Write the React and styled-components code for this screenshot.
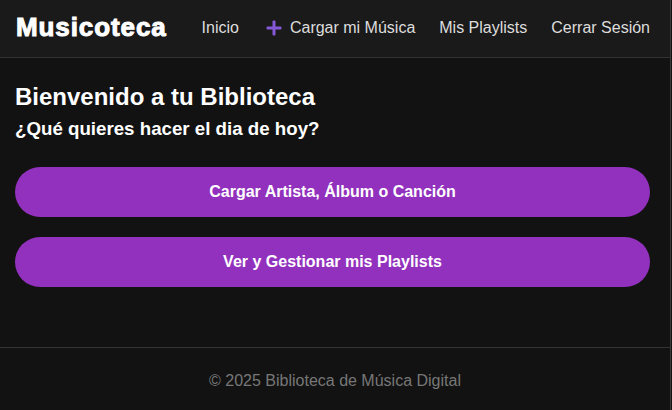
import React from 'react'
import styled, { createGlobalStyle } from 'styled-components';

const GlobalStyle = createGlobalStyle`
  * { box-sizing: border-box; }
  body {
    margin: 0;
    background-color: #121212;
    font-family: "Liberation Sans", Arial, sans-serif;
  }
`;

function PlusIcon() {
    return (
        <svg width="16" height="16" viewBox="0 0 16 16">
            <rect x="6.5" y="0.5" width="3" height="15" rx="1" fill="#8458d6" />
            <rect x="0.5" y="6.5" width="15" height="3" rx="1" fill="#8458d6" />
        </svg>
    )
}

function App() {
    return (
<Page>
    <GlobalStyle />
    <Header>
        <Logo>Musicoteca</Logo>
        <Nav>
            <NavLink href="#">Inicio</NavLink>
            <NavLink href="#" $spaced><PlusIcon /> Cargar mi Música</NavLink>
            <NavLink href="#">Mis Playlists</NavLink>
            <NavLink href="#">Cerrar Sesión</NavLink>
        </Nav>
    </Header>

    <Main>
        <Title>Bienvenido a tu Biblioteca</Title>
        <Subtitle>¿Qué quieres hacer el dia de hoy?</Subtitle>

        <Actions>
            <ActionButton>Cargar Artista, Álbum o Canción</ActionButton>
            <ActionButton>Ver y Gestionar mis Playlists</ActionButton>
        </Actions>
    </Main>

    <Footer>© 2025 Biblioteca de Música Digital</Footer>
</Page>
    )
}

export default App

const Page = styled.div`
  width: 671px;
  min-height: 410px;
  border-right: 1px solid #3a3a3a;
  background-color: #121212;
  display: flex;
  flex-direction: column;
`;

const Header = styled.header`
  height: 58px;
  background-color: #1a1a1a;
  border-bottom: 1px solid #333;
  display: flex;
  align-items: center;
  justify-content: space-between;
  padding: 0 20px 0 16px;
`;

const Logo = styled.div`
  color: #fff;
  font-size: 26px;
  font-weight: 700;
  letter-spacing: 0.9px;
  -webkit-text-stroke: 1px #fff;
  margin-top: -3px;
`;

const Nav = styled.nav`
  display: flex;
  align-items: center;
  gap: 24px;
  margin-top: -2px;
`;

const NavLink = styled.a`
  color: #ddd;
  text-decoration: none;
  font-size: 16px;
  display: flex;
  align-items: center;
  gap: 8px;
  margin-left: ${props => props.$spaced ? '3px' : '0'};

  svg {
    margin-top: 1px;
  }
`;

const Main = styled.main`
  flex: 1;
  padding: 25px 15px 0 15px;
  height: 289px;
`;

const Title = styled.h2`
  margin: 0;
  color: #fff;
  font-size: 24px;
  font-weight: 700;
  line-height: 28px;
`;

const Subtitle = styled.h3`
  margin: 7px 0 0;
  color: #fff;
  font-size: 18.72px;
  font-weight: 700;
  line-height: 22px;
`;

const Actions = styled.div`
  display: flex;
  flex-direction: column;
  gap: 20px;
  margin-top: 27px;
  padding-right: 5px;
`;

const ActionButton = styled.button`
  height: 50px;
  border: none;
  border-radius: 25px;
  background-color: #9131bd;
  color: #fff;
  font-family: "Liberation Sans", Arial, sans-serif;
  font-size: 16px;
  font-weight: 700;
  cursor: pointer;
`;

const Footer = styled.footer`
  height: 63px;
  border-top: 1px solid #333;
  display: flex;
  align-items: center;
  justify-content: center;
  color: #777;
  font-size: 16px;
  padding-top: 4px;
`;
